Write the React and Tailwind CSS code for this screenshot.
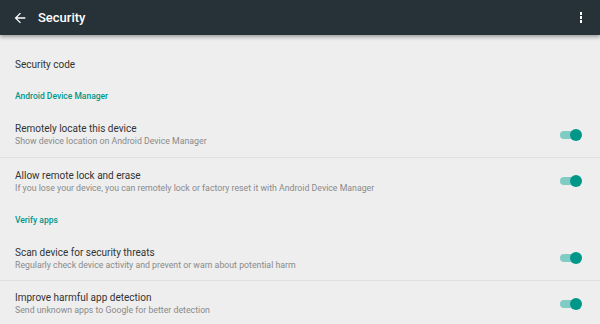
import React from 'react';

const Toggle = () => (
  <div className="relative w-[22px] h-[12px] flex items-center">
    <div className="w-[20px] h-[8px] rounded-full bg-[#80cbc4]" />
    <div className="absolute right-0 w-[12px] h-[12px] rounded-full bg-[#009688]" />
  </div>
);

const Header = ({ children }) => (
  <div className="h-[32px] flex items-center px-[15px] text-[8.5px] font-medium text-[#009688]">{children}</div>
);

const Row = ({ title, sub, border, short }) => (
  <div className={`${short ? 'h-[45px]' : 'h-[46px]'} flex items-center justify-between pl-[15px] pr-[18px] ${border ? 'border-b border-[#e0e0e0]' : ''}`}>
    <div className="flex flex-col">
      <span className="text-[10px] leading-[13px] text-[#333]">{title}</span>
      <span className="text-[8.75px] leading-[12px] text-[#8a8a8a]">{sub}</span>
    </div>
    <Toggle />
  </div>
);

const App = () => {
  return (
    <div className="w-[600px] h-[324px] bg-[#eeeeee] overflow-hidden" style={{ fontFamily: 'Roboto, sans-serif' }}>
      <div className="h-[35px] bg-[#263238] flex items-center justify-between pl-[12px] pr-[14px] shadow-[0_2px_4px_rgba(0,0,0,0.35)] relative z-10">
        <div className="flex items-center gap-[10px]">
          <svg width="16" height="16" viewBox="0 0 24 24" fill="#fff">
            <path d="M20 11H7.83l5.59-5.59L12 4l-8 8 8 8 1.41-1.41L7.83 13H20v-2z" />
          </svg>
          <span className="text-white text-[13px] font-medium">Security</span>
        </div>
        <div className="flex flex-col gap-[1.5px] mr-[4px]">
          <div className="w-[2.5px] h-[2.5px] bg-white" />
          <div className="w-[2.5px] h-[2.5px] bg-white" />
          <div className="w-[2.5px] h-[2.5px] bg-white" />
        </div>
      </div>
      <div className="pt-[13px]">
        <div className="h-[32px] flex items-center px-[15px] text-[10px] text-[#333]">Security code</div>
        <Header>Android Device Manager</Header>
        <Row title="Remotely locate this device" sub="Show device location on Android Device Manager" border />
        <Row title="Allow remote lock and erase" sub="If you lose your device, you can remotely lock or factory reset it with Android Device Manager" />
        <Header>Verify apps</Header>
        <Row title="Scan device for security threats" sub="Regularly check device activity and prevent or warn about potential harm" border short />
        <Row title="Improve harmful app detection" sub="Send unknown apps to Google for better detection" short />
      </div>
    </div>
  );
};

export default App;
